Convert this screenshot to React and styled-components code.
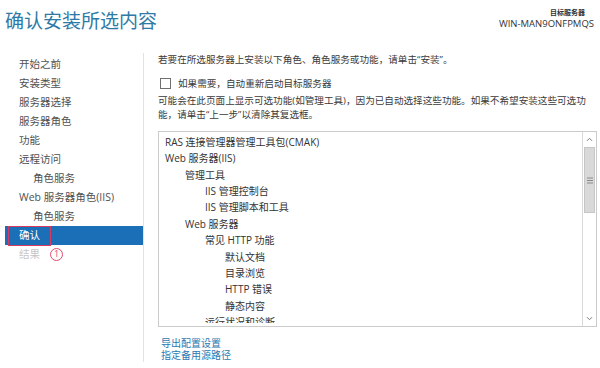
import React from 'react'
import styled, { createGlobalStyle } from 'styled-components'

const GlobalStyle = createGlobalStyle`
    body {
        margin: 0;
        background: #fff;
        font-family: "Open Sans", "Noto Sans CJK SC", sans-serif;
    }
`

const Page = styled.div`
    width: 600px;
    height: 368px;
    display: flex;
    flex-direction: column;
    overflow: hidden;
`

const Header = styled.header`
    height: 52px;
    flex: none;
    display: flex;
    justify-content: space-between;
    align-items: flex-start;
`

const Title = styled.h1`
    margin: 9px 0 0 5px;
    font-size: 19px;
    line-height: 24px;
    font-weight: 400;
    color: #2e7aa6;
`

const Target = styled.div`
    padding: 8px 6px 0 0;
    text-align: right;
    color: #333;
`

const TargetLabel = styled.div`
    font-size: 7px;
    line-height: 9px;
    margin-right: 9px;
    font-weight: 700;
`

const TargetName = styled.div`
    margin-top: 1px;
    font-size: 9.5px;
    line-height: 11px;
`

const Main = styled.div`
    flex: 1;
    display: flex;
    min-height: 0;
`

const Sidebar = styled.nav`
    width: 144px;
    flex: none;
    box-sizing: border-box;
    margin: 1px 0 6px;
    padding: 2px 0 0 5px;
    border-right: 1px solid #e2e2e2;
`

const NavItem = styled.div`
    position: relative;
    height: 19px;
    line-height: 19px;
    padding-left: ${p => (p.$indent ? 28 : 14)}px;
    font-size: 10.5px;
    color: ${p => (p.$active ? '#fff' : p.$disabled ? '#c6c6c6' : '#505050')};
    background: ${p => (p.$active ? '#1a6fb6' : 'transparent')};
    white-space: nowrap;
`

const Highlight = styled.span`
    position: absolute;
    left: 3px;
    top: 0;
    width: 43px;
    height: 20px;
    box-sizing: border-box;
    border: 1.5px solid #d63a63;
`

const StepBadge = styled.span`
    position: absolute;
    left: 45px;
    top: 22px;
    width: 13px;
    height: 13px;
    box-sizing: border-box;
    border: 1.3px solid #e2486f;
    border-radius: 50%;
    color: #e2486f;
    font-size: 9px;
    line-height: 10.5px;
    text-align: center;
`

const Content = styled.section`
    margin-left: 14px;
    width: 439px;
    padding-top: 1px;
    color: #3a3a3a;
`

const Intro = styled.p`
    margin: 0;
    font-size: 9.6px;
    line-height: 14px;
    white-space: nowrap;
`

const CheckRow = styled.label`
    margin-top: 9px;
    height: 14px;
    display: flex;
    align-items: center;
    font-size: 9.6px;
`

const CheckBox = styled.span`
    width: 11px;
    height: 11px;
    box-sizing: border-box;
    margin: 0 7px 0 2px;
    border: 1px solid #707070;
    background: #fff;
`

const Note = styled.p`
    margin: 4px 0 0;
    font-size: 9.6px;
    line-height: 13.5px;
    white-space: nowrap;
`

const ListBox = styled.div`
    margin-top: 10px;
    height: 196px;
    box-sizing: border-box;
    border: 1px solid #cbcbcb;
    display: flex;
`

const ListViewport = styled.div`
    flex: 1;
    margin-bottom: 3px;
    padding: 1.8px 0 0 6px;
    overflow: hidden;
`

const ListItem = styled.div`
    height: 16.4px;
    line-height: 16.4px;
    padding-left: ${p => p.$level * 20}px;
    font-size: 10px;
    color: #333;
    white-space: nowrap;
`

const Scrollbar = styled.div`
    width: 13px;
    flex: none;
    border-left: 1px solid #dadada;
    display: flex;
    flex-direction: column;
`

const ScrollButton = styled.div`
    height: 15px;
    display: flex;
    align-items: center;
    justify-content: center;
`

const Thumb = styled.div`
    height: 66px;
    margin: 0 1px;
    box-sizing: border-box;
    background: #d9d9d9;
    border: 1px solid #c6c6c6;
    display: flex;
    align-items: center;
    justify-content: center;
`

const Track = styled.div`
    flex: 1;
`

const Links = styled.div`
    margin-top: 10px;
    padding-left: 3px;
    display: flex;
    flex-direction: column;
`

const Link = styled.a`
    font-size: 10px;
    line-height: 12px;
    color: #2a78b0;
    text-decoration: none;
`

const steps = [
    { label: '开始之前' },
    { label: '安装类型' },
    { label: '服务器选择' },
    { label: '服务器角色' },
    { label: '功能' },
    { label: '远程访问' },
    { label: '角色服务', indent: true },
    { label: 'Web 服务器角色(IIS)' },
    { label: '角色服务', indent: true },
    { label: '确认', active: true },
    { label: '结果', disabled: true },
]

const features = [
    ['RAS 连接管理器管理工具包(CMAK)', 0],
    ['Web 服务器(IIS)', 0],
    ['管理工具', 1],
    ['IIS 管理控制台', 2],
    ['IIS 管理脚本和工具', 2],
    ['Web 服务器', 1],
    ['常见 HTTP 功能', 2],
    ['默认文档', 3],
    ['目录浏览', 3],
    ['HTTP 错误', 3],
    ['静态内容', 3],
    ['运行状况和诊断', 2],
]

const Chevron = ({ up }) => (
    <svg width="7" height="5" viewBox="0 0 7 5">
        <path
            d={up ? 'M1 3.8 L3.5 1.3 L6 3.8' : 'M1 1.2 L3.5 3.7 L6 1.2'}
            fill="none"
            stroke="#7a7a7a"
            strokeWidth="1"
        />
    </svg>
)

const Grip = () => (
    <svg width="6" height="7" viewBox="0 0 6 7">
        <path d="M0 1 H6 M0 3.5 H6 M0 6 H6" stroke="#8a8a8a" strokeWidth="1" />
    </svg>
)

export default function App() {
    return (
        <Page>
            <GlobalStyle />
            <Header>
                <Title>确认安装所选内容</Title>
                <Target>
                    <TargetLabel>目标服务器</TargetLabel>
                    <TargetName>WIN-MAN9ONFPMQS</TargetName>
                </Target>
            </Header>
            <Main>
                <Sidebar>
                    {steps.map((s, i) => (
                        <NavItem key={i} $indent={s.indent} $active={s.active} $disabled={s.disabled}>
                            {s.label}
                            {s.active && (
                                <>
                                    <Highlight />
                                    <StepBadge>1</StepBadge>
                                </>
                            )}
                        </NavItem>
                    ))}
                </Sidebar>
                <Content>
                    <Intro>若要在所选服务器上安装以下角色、角色服务或功能，请单击“安装”。</Intro>
                    <CheckRow>
                        <CheckBox />
                        如果需要，自动重新启动目标服务器
                    </CheckRow>
                    <Note>
                        可能会在此页面上显示可选功能(如管理工具)，因为已自动选择这些功能。如果不希望安装这些可选功<br />
                        能，请单击“上一步”以清除其复选框。
                    </Note>
                    <ListBox>
                        <ListViewport>
                            {features.map(([text, level], i) => (
                                <ListItem key={i} $level={level}>{text}</ListItem>
                            ))}
                        </ListViewport>
                        <Scrollbar>
                            <ScrollButton><Chevron up /></ScrollButton>
                            <Thumb><Grip /></Thumb>
                            <Track />
                            <ScrollButton><Chevron /></ScrollButton>
                        </Scrollbar>
                    </ListBox>
                    <Links>
                        <Link href="#">导出配置设置</Link>
                        <Link href="#">指定备用源路径</Link>
                    </Links>
                </Content>
            </Main>
        </Page>
    )
}
